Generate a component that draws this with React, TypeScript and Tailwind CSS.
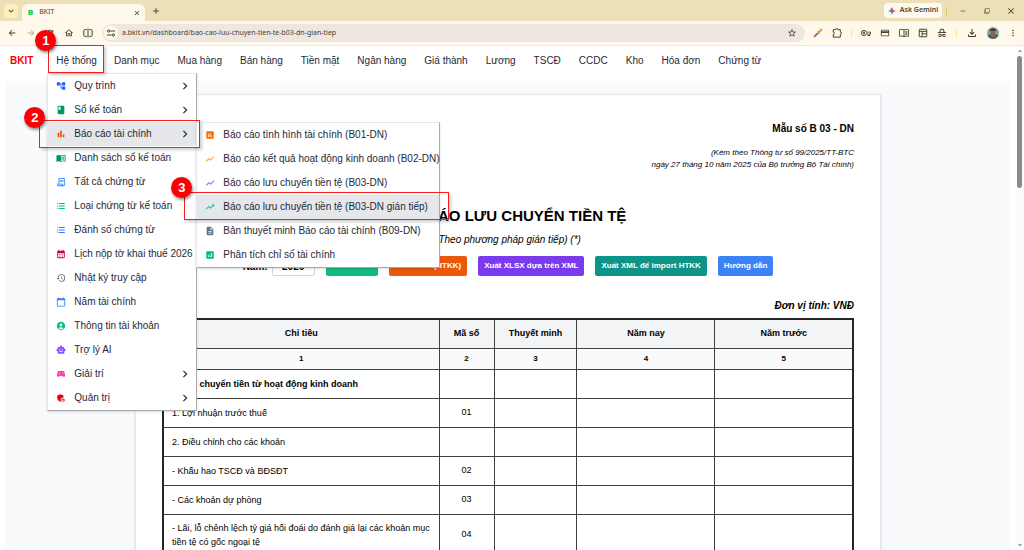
import React from 'react';
import type { IconType } from 'react-icons';
import {
  MdAccountCircle,
  MdAccountTree,
  MdAdd,
  MdAdminPanelSettings,
  MdAnalytics,
  MdArrowBack,
  MdArrowDropDown,
  MdArrowDropUp,
  MdArrowForward,
  MdAssessment,
  MdBarChart,
  MdBook,
  MdCalendarMonth,
  MdCalendarToday,
  MdClose,
  MdDescription,
  MdFilterNone,
  MdFormatListBulleted,
  MdFormatListNumbered,
  MdHistory,
  MdKeyboardArrowDown,
  MdKeyboardArrowRight,
  MdMenuBook,
  MdMoreVert,
  MdOutlineCreditCard,
  MdOutlineFileDownload,
  MdOutlineHome,
  MdOutlineReceiptLong,
  MdOutlineVpnKey,
  MdRefresh,
  MdRemove,
  MdShowChart,
  MdSmartToy,
  MdSportsEsports,
  MdStarBorder,
  MdTrendingUp
} from 'react-icons/md';

interface MenuEntry {
  label: string;
  icon: IconType;
  color: string;
  hasChildren?: boolean;
  active?: boolean;
}

interface ReportRow {
  title: string;
  code: string;
  bold?: boolean;
}

const navItems = [
  'Danh mục',
  'Mua hàng',
  'Bán hàng',
  'Tiền mặt',
  'Ngân hàng',
  'Giá thành',
  'Lương',
  'TSCĐ',
  'CCDC',
  'Kho',
  'Hóa đơn',
  'Chứng từ'
];

const systemMenu: MenuEntry[] = [
  { label: 'Quy trình', icon: MdAccountTree, color: 'text-blue-600', hasChildren: true },
  { label: 'Sổ kế toán', icon: MdBook, color: 'text-emerald-600', hasChildren: true },
  { label: 'Báo cáo tài chính', icon: MdBarChart, color: 'text-orange-600', hasChildren: true, active: true },
  { label: 'Danh sách sổ kế toán', icon: MdMenuBook, color: 'text-emerald-600' },
  { label: 'Tất cả chứng từ', icon: MdOutlineReceiptLong, color: 'text-blue-500' },
  { label: 'Loại chứng từ kế toán', icon: MdFormatListBulleted, color: 'text-teal-500' },
  { label: 'Đánh số chứng từ', icon: MdFormatListNumbered, color: 'text-blue-500' },
  { label: 'Lịch nộp tờ khai thuế 2026', icon: MdCalendarMonth, color: 'text-rose-700' },
  { label: 'Nhật ký truy cập', icon: MdHistory, color: 'text-slate-500' },
  { label: 'Năm tài chính', icon: MdCalendarToday, color: 'text-blue-500' },
  { label: 'Thông tin tài khoản', icon: MdAccountCircle, color: 'text-emerald-500' },
  { label: 'Trợ lý AI', icon: MdSmartToy, color: 'text-violet-500' },
  { label: 'Giải trí', icon: MdSportsEsports, color: 'text-pink-500', hasChildren: true },
  { label: 'Quản trị', icon: MdAdminPanelSettings, color: 'text-red-600', hasChildren: true }
];

const reportMenu: MenuEntry[] = [
  { label: 'Báo cáo tình hình tài chính (B01-DN)', icon: MdAssessment, color: 'text-orange-500' },
  { label: 'Báo cáo kết quả hoạt động kinh doanh (B02-DN)', icon: MdShowChart, color: 'text-amber-500' },
  { label: 'Báo cáo lưu chuyển tiền tệ (B03-DN)', icon: MdShowChart, color: 'text-violet-500' },
  { label: 'Báo cáo lưu chuyển tiền tệ (B03-DN gián tiếp)', icon: MdTrendingUp, color: 'text-emerald-500', active: true },
  { label: 'Bản thuyết minh Báo cáo tài chính (B09-DN)', icon: MdDescription, color: 'text-slate-500' },
  { label: 'Phân tích chỉ số tài chính', icon: MdAnalytics, color: 'text-emerald-500' }
];

const actions = [
  { label: 'Xuất XLSX', className: 'bg-[#10b981]' },
  { label: 'Xuất XML (HTKK)', className: 'bg-[#ea580c]' },
  { label: 'Xuất XLSX dựa trên XML', className: 'bg-[#7c3aed]' },
  { label: 'Xuất XML để import HTKK', className: 'bg-[#0d9488]' },
  { label: 'Hướng dẫn', className: 'bg-[#3b82f6]' }
];

const reportRows: ReportRow[] = [
  { title: 'I. Lưu chuyển tiền từ hoạt động kinh doanh', code: '', bold: true },
  { title: '1. Lợi nhuận trước thuế', code: '01' },
  { title: '2. Điều chỉnh cho các khoản', code: '' },
  { title: '- Khấu hao TSCĐ và BĐSĐT', code: '02' },
  { title: '- Các khoản dự phòng', code: '03' },
  {
    title: '- Lãi, lỗ chênh lệch tỷ giá hối đoái do đánh giá lại các khoản mục tiền tệ có gốc ngoại tệ',
    code: '04'
  }
];

/** Four-colour spark used by the assistant button. */
const GeminiSpark = () => (
  <svg viewBox="0 0 24 24" className="w-2 h-2" aria-hidden="true">
    <path d="M12 0C13 7 17 11 24 12H12L6 6Q11 6 12 0Z" fill="#ea4335" />
    <path d="M24 12C17 13 13 17 12 24V12Z" fill="#4285f4" />
    <path d="M12 24C11 17 7 13 0 12H12Z" fill="#34a853" />
    <path d="M0 12C7 11 11 7 12 0V12Z" fill="#4285f4" />
  </svg>
);

const SplitViewIcon = () => (
  <svg viewBox="0 0 24 24" className="w-2.5 h-2.5" fill="none" stroke="currentColor" strokeWidth="2.4" aria-hidden="true">
    <path d="M9 4H4a2 2 0 0 0-2 2v12a2 2 0 0 0 2 2h5M15 4h5a2 2 0 0 1 2 2v12a2 2 0 0 1-2 2h-5M12 1v22" />
  </svg>
);

/** Two sliders, shown at the left of the address. */
const SiteInfoIcon = () => (
  <svg viewBox="0 0 24 24" className="w-2 h-2" fill="none" stroke="currentColor" strokeWidth="3" aria-hidden="true">
    <path d="M10 6H24M0 18H14" />
    <circle cx="5" cy="6" r="3.500" />
    <circle cx="19" cy="18" r="3.500" />
  </svg>
);

const PickerIcon = () => (
  <svg viewBox="0 0 24 24" className="w-2.5 h-2.5" aria-hidden="true">
    <path d="M12 12L5 19" stroke="#3b5bdb" strokeWidth="4" />
    <path d="M11 8L16 13" stroke="#ef4444" strokeWidth="3" />
    <path d="M14 10L20 4" stroke="#f59e0b" strokeWidth="5" strokeLinecap="round" />
    <circle cx="4" cy="20" r="2.500" fill="#ec4899" />
  </svg>
);

const ExtensionIcon = () => (
  <svg viewBox="0 0 24 24" className="w-2.5 h-2.5" fill="none" stroke="currentColor" strokeWidth="2.4" aria-hidden="true">
    <path d="M3 4H9C9 0 14 0 14 4H20V10C24 10 24 15 20 15V22H3V16C7 16 7 10 3 10Z" />
  </svg>
);

const BookIcon = () => (
  <svg viewBox="0 0 24 24" className="w-2.5 h-2.5" fill="none" stroke="currentColor" strokeWidth="2.2" aria-hidden="true">
    <path d="M12 5C9 3 5 3 1 4V20C5 19 9 19 12 21C15 19 19 19 23 20V4C19 3 15 3 12 5V21M15 9H20M15 12H20M15 15H20" />
  </svg>
);

const LayoutIcon = () => (
  <svg viewBox="0 0 24 24" className="w-2.5 h-2.5" fill="none" stroke="currentColor" strokeWidth="2.4" aria-hidden="true">
    <rect x="3" y="3" width="18" height="18" rx="1" />
    <path d="M3 8H21M10 8V21M10 14H21" />
  </svg>
);

const IncognitoIcon = () => (
  <svg viewBox="0 0 24 24" className="w-2.5 h-2.5" fill="none" stroke="currentColor" strokeWidth="2.4" aria-hidden="true">
    <path d="M7 10L8.500 3H15.500L17 10M2 11H22M9 17H15" />
    <circle cx="7" cy="18" r="3" />
    <circle cx="17" cy="18" r="3" />
  </svg>
);

const Avatar = () => (
  <svg viewBox="0 0 24 24" className="w-3 h-3 rounded-full" role="img" aria-label="Profile">
    <rect width="24" height="24" fill="#8aa4a6" />
    <path d="M0 24V17L7 14H17L24 17V24Z" fill="#4b6466" />
    <ellipse cx="12" cy="12" rx="5" ry="8" fill="#8d6353" />
    <path d="M5 9C5 1 19 1 19 9L16 7H8Z" fill="#22282c" />
  </svg>
);

/** Vertical list of links, shared by the main menu and the flyout. */
const Menu: React.FC<{ items: MenuEntry[] }> = ({ items }) => (
  <ul className="bg-white border border-gray-200 border-r-[#a9a9a9] border-b-[#a9a9a9] shadow-sm">
    {items.map(({ label, icon: Icon, color, hasChildren, active }) => (
      <li key={label} className={active ? 'bg-[#e5e7eb]' : ''}>
        <a href="#" className="h-6 pl-2 pr-1 flex items-center gap-2 whitespace-nowrap text-[10px] text-gray-800">
          <Icon className={`w-2.5 h-2.5 flex-shrink-0 ${color}`} />
          <span className="flex-1">{label}</span>
          {hasChildren && <MdKeyboardArrowRight className="w-3.5 h-3.5" />}
        </a>
      </li>
    ))}
  </ul>
);

interface StepProps {
  number: number;
  /** Place and size of the frame */
  className: string;
  /** Place of the badge, relative to the frame */
  badgeClassName: string;
}

/** Red frame with a numbered badge that points out a step. */
const Step: React.FC<StepProps> = ({ number, className, badgeClassName }) => (
  <div className={`absolute pointer-events-none border border-[#f91c1c] shadow-[2px_2px_3px_rgba(0,0,0,0.2)] ${className}`}>
    <span
      className={`absolute w-[21px] h-[21px] rounded-full bg-[#fb0007] text-white text-[13px] font-bold flex items-center justify-center shadow-[1px_2px_3px_rgba(0,0,0,0.45)] ${badgeClassName}`}
    >
      {number}
    </span>
  </div>
);

const BrowserChrome = () => (
  <header className="text-[#45432f] font-['Noto_Sans',sans-serif]">
    <div className="h-[21px] bg-[#ede0b8] flex items-center pl-1 pr-2">
      <button aria-label="Search tabs" className="w-[14px] h-[14px] rounded bg-[#ffefbd] flex items-center justify-center">
        <MdKeyboardArrowDown className="w-2.5 h-2.5" />
      </button>
      <div className="ml-1 mt-1 h-[18px] w-[123px] rounded-t-md bg-[#fff9ec] flex items-center pl-1.5 pr-1">
        <span className="font-['Roboto',sans-serif] text-[8px] font-black text-green-500">B</span>
        <span className="ml-1.5 flex-1 text-[7px]">BKIT</span>
        <button aria-label="Close tab"><MdClose className="w-2 h-2" /></button>
      </div>
      <button aria-label="New tab" className="ml-1.5"><MdAdd className="w-2.5 h-2.5" /></button>
      <button className="ml-auto h-[15px] w-[58px] rounded bg-[#fffaf0] flex items-center justify-center gap-1 text-[7px] font-semibold">
        <GeminiSpark />
        Ask Gemini
      </button>
      <span className="ml-1 w-px h-2 bg-[#e0c454]" />
      <button aria-label="Minimize" className="ml-3"><MdRemove className="w-2 h-2" /></button>
      <button aria-label="Restore" className="ml-[17px]"><MdFilterNone className="w-1.5 h-1.5" /></button>
      <button aria-label="Close" className="ml-4"><MdClose className="w-2.5 h-2.5" /></button>
    </div>
    <div className="h-[25px] bg-[#fff9ec] border-b border-[#f1e8d8] flex items-center pl-[7px] pr-2">
      <div className="flex items-center gap-[9px]">
        <button aria-label="Back"><MdArrowBack className="w-2.5 h-2.5" /></button>
        <button aria-label="Forward" className="text-[#b5b09c]"><MdArrowForward className="w-2.5 h-2.5" /></button>
        <button aria-label="Reload"><MdRefresh className="w-2.5 h-2.5" /></button>
        <button aria-label="Home"><MdOutlineHome className="w-2.5 h-2.5" /></button>
        <button aria-label="Split view"><SplitViewIcon /></button>
      </div>
      <div className="ml-[9px] h-[18px] flex-1 rounded-full bg-[#efe6e0] flex items-center pl-0.5 pr-2">
        <span className="w-[14px] h-[14px] rounded-full bg-[#fff9ec] flex items-center justify-center">
          <SiteInfoIcon />
        </span>
        <input
          type="text"
          aria-label="Address"
          readOnly
          value="a.bkit.vn/dashboard/bao-cao-luu-chuyen-tien-te-b03-dn-gian-tiep"
          className="ml-1 flex-1 bg-transparent text-[7px] outline-none"
        />
        <button aria-label="Bookmark"><MdStarBorder className="w-2.5 h-2.5" /></button>
      </div>
      <div className="ml-2 flex items-center gap-[9px]">
        <button aria-label="Color picker"><PickerIcon /></button>
        <button aria-label="Extensions"><ExtensionIcon /></button>
        <span className="w-px h-2 bg-[#fbe38a]" />
        <button aria-label="Passwords"><MdOutlineVpnKey className="w-2.5 h-2.5" /></button>
        <button aria-label="Payments"><MdOutlineCreditCard className="w-2.5 h-2.5" /></button>
        <button aria-label="Reading mode"><BookIcon /></button>
        <button aria-label="Layout"><LayoutIcon /></button>
        <button aria-label="Incognito"><IncognitoIcon /></button>
        <span className="w-px h-2 bg-[#fbe38a]" />
        <button aria-label="Downloads"><MdOutlineFileDownload className="w-3 h-3" /></button>
        <Avatar />
        <button aria-label="More" className="w-2"><MdMoreVert className="w-2.5 h-2.5" /></button>
      </div>
    </div>
  </header>
);

/** The statement sheet: heading, export buttons and the figures table. */
const ReportSheet = () => (
  <article className="w-[746px] bg-white border border-gray-200 shadow-sm px-[26px] pt-6 text-black">
    <div className="flex flex-col items-end text-right">
      <p className="text-[10px] leading-5 font-bold">Mẫu số B 03 - DN</p>
      <p className="mt-2 text-[8px] leading-3 italic">
        (Kèm theo Thông tư số 99/2025/TT-BTC
        <br />
        ngày 27 tháng 10 năm 2025 của Bộ trưởng Bộ Tài chính)
      </p>
    </div>
    <h1 className="mt-[35px] text-center text-[15px] leading-5 font-bold">BÁO CÁO LƯU CHUYỂN TIỀN TỆ</h1>
    <p className="mt-1.5 text-center text-[10px] leading-4 italic">(Theo phương pháp gián tiếp) (*)</p>
    <div className="mt-2 flex items-center justify-center gap-[11px]">
      <label className="flex items-center gap-1 text-[10px] font-bold">
        Năm:
        <input
          type="text"
          defaultValue="2026"
          className="w-[43px] h-5 border border-gray-300 rounded-xs text-center text-[10px] font-bold"
        />
      </label>
      {actions.map(({ label, className }) => (
        <button
          key={label}
          type="button"
          className={`h-5 px-1.5 rounded-xs text-white text-[8px] font-bold whitespace-nowrap ${className}`}
        >
          {label}
        </button>
      ))}
    </div>
    <p className="mt-5 text-right text-[10px] leading-5 font-bold italic">Đơn vị tính: VNĐ</p>
    <table className="mt-0.5 w-full table-fixed border-collapse border-2 border-neutral-800 text-[9px] [&_td]:border [&_td]:border-neutral-700 [&_th]:border [&_th]:border-neutral-700">
      <colgroup>
        <col className="w-[40%]" />
        <col className="w-[8%]" />
        <col className="w-[12%]" />
        <col className="w-[20%]" />
        <col className="w-[20%]" />
      </colgroup>
      <thead>
        <tr className="h-[29px] bg-gray-100">
          <th>Chỉ tiêu</th>
          <th>Mã số</th>
          <th>Thuyết minh</th>
          <th>Năm nay</th>
          <th>Năm trước</th>
        </tr>
        <tr className="h-[21px] bg-gray-50 text-[8px]">
          <th>1</th>
          <th>2</th>
          <th>3</th>
          <th>4</th>
          <th>5</th>
        </tr>
      </thead>
      <tbody>
        {reportRows.map(({ title, code, bold }) => (
          <tr key={title} className="h-[29px]">
            <td className={`px-2 py-1.5 leading-[14px] ${bold ? 'font-bold' : ''}`}>{title}</td>
            <td className="text-center">{code}</td>
            <td />
            <td />
            <td />
          </tr>
        ))}
      </tbody>
    </table>
  </article>
);

export default function App() {
  return (
    <div className="h-screen flex flex-col overflow-hidden bg-white font-['Liberation_Sans',Arial,sans-serif]">
      <BrowserChrome />
      <div className="flex-1 min-h-0 flex">
        <div className="flex-1 min-w-0 flex flex-col pl-[5px] pr-1">
          <nav className="relative z-10 h-[35px] flex-shrink-0 flex items-start pl-[5px] text-[10px] leading-[30px] text-gray-800">
            <a href="#" className="font-bold text-[#fb0007]">BKIT</a>
            <div className="relative ml-[23px]">
              <a href="#">Hệ thống</a>
              <div className="absolute -left-[9px] top-[27px] w-[150px]">
                <Menu items={systemMenu} />
                <div className="absolute left-[149px] top-[49px] w-[244px]">
                  <Menu items={reportMenu} />
                  <Step number={3} className="-left-3 top-[70px] w-[265px] h-7" badgeClassName="-left-3.5 -top-4" />
                </div>
                <Step number={2} className="-left-2 top-[47px] w-[161px] h-7" badgeClassName="-left-4 -top-3.5" />
              </div>
              <Step number={1} className="-left-2 -top-px w-14 h-7" badgeClassName="-left-3.5 -top-4" />
            </div>
            <ul className="ml-[17px] flex gap-[18px] whitespace-nowrap">
              {navItems.map((item) => (
                <li key={item}><a href="#">{item}</a></li>
              ))}
            </ul>
          </nav>
          <main className="flex-1 min-h-0 overflow-hidden bg-[#f8fafc] flex justify-center items-start pt-[13px]">
            <ReportSheet />
          </main>
        </div>
        <div className="w-[9px] bg-[#fcfcfc] flex flex-col items-center text-[#8b8b8b]" aria-hidden="true">
          <MdArrowDropUp className="w-2.5 h-2.5 flex-shrink-0" />
          <div className="w-[5px] h-[132px] rounded-full bg-[#8b8b8b]" />
          <MdArrowDropDown className="mt-auto w-2.5 h-2.5 flex-shrink-0" />
        </div>
      </div>
    </div>
  );
}
